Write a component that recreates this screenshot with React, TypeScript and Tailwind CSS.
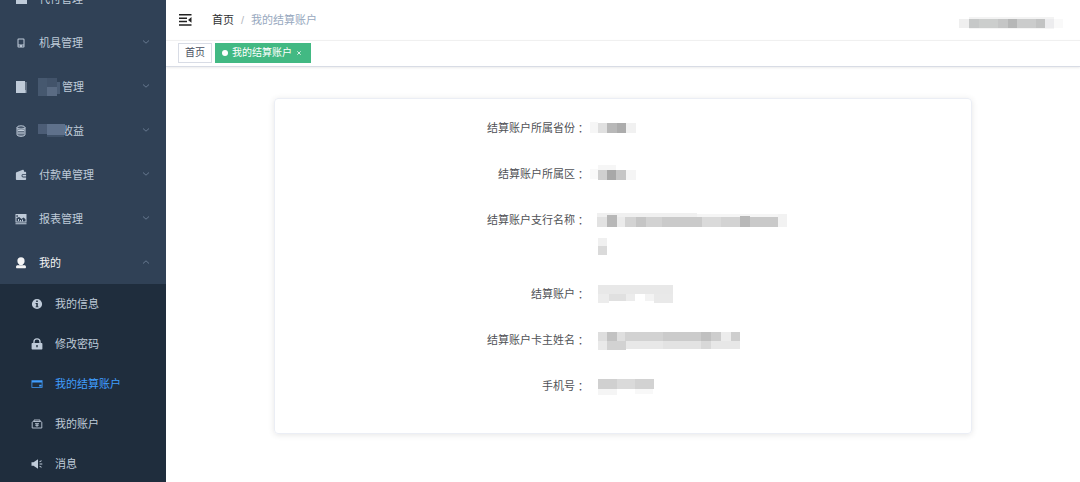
import React from "react";

type Cell = [number, number, number, number, string];

function Mosaic({ width, height, cells, label }: { width: number; height: number; cells: Cell[]; label: string }) {
  return (
    <svg
      width={width}
      height={height}
      viewBox={`0 0 ${width} ${height}`}
      role="img"
      aria-label={label}
      shapeRendering="crispEdges"
      className="block shrink-0 overflow-visible"
    >
      {cells.map(([x, y, w, h, fill], i) => (
        <rect key={i} x={x} y={y} width={w} height={h} fill={fill} />
      ))}
    </svg>
  );
}

function Icon({ children }: { children: React.ReactNode }) {
  return (
    <svg width="12" height="12" viewBox="0 0 12 12" fill="currentColor" aria-hidden="true" className="block shrink-0">
      {children}
    </svg>
  );
}

const icons = {
  order: <path d="M1 1h11v10H1z" />,
  device: (
    <path
      fillRule="evenodd"
      d="M3.5 1.5h5a1 1 0 0 1 1 1v7a1 1 0 0 1-1 1h-5a1 1 0 0 1-1-1v-7a1 1 0 0 1 1-1zm0 1v5h5v-5zm0 6v1h1.6v-1zm3.4 0v1h1.6v-1z"
    />
  ),
  blurred: (
    <>
      <path d="M1 0h9v12H1z" />
      <path d="M10 1h3v11h-3z" opacity="0.35" />
      <path d="M9 9h2v3H9z" opacity="0.6" />
    </>
  ),
  income: (
    <>
      <path
        fillOpacity="0.35"
        d="M2 2.500h8v7.200c0 .9-1.800 1.600-4 1.600s-4-.7-4-1.600z"
      />
      <g fill="none" stroke="currentColor">
        <ellipse cx="6" cy="2.500" rx="4" ry="1.700" />
        <path d="M2 2.500v7.200c0 .9 1.800 1.600 4 1.600s4-.7 4-1.600V2.500M3 5.500h6M3 8h6" />
      </g>
    </>
  ),
  wallet: (
    <path
      fillRule="evenodd"
      d="M1.500 3.200 7.800.8c.5-.2.9 0 1 .5l.3 1.500h1.200c.5 0 .8.3.8.800V5H8.200a1.700 1.700 0 0 0 0 3.400h2.900v1.800c0 .5-.3.800-.8.800H1.700c-.5 0-.8-.3-.8-.8V4c0-.4.200-.7.600-.8zM8.300 5.800h2.800v1.800H8.300a.9.9 0 0 1 0-1.800z"
    />
  ),
  report: (
    <>
      <path fillRule="evenodd" d="M.5 1h11v8.500h-11zm1 1v2h1.200V2zm0 3v3.500h9V6.200L8.600 4.400 6.400 6 4.200 4z" />
      <path d="M.5 10.300h11v1H.5zM3 6h1v2H3zm2 1h1v1.500H5zm2-.5h1v2H7z" />
    </>
  ),
  user: (
    <>
      <circle cx="6" cy="3.900" r="3.600" />
      <path d="M4.300 6h3.400v2H4.300zM2 8.300h8c.7.400 1 .9 1 1.600 0 .9-.4 1.300-1 1.300H2c-.6 0-1-.4-1-1.300 0-.7.300-1.200 1-1.600z" />
    </>
  ),
  info: (
    <path
      fillRule="evenodd"
      d="M6 .9a5.100 5.100 0 1 1 0 10.200A5.100 5.100 0 0 1 6 .9zm-.8 1.600V4h1.600V2.500zM4.600 5v1h.7v2.500h-.7v.8h2.900v-.8h-.7V5z"
    />
  ),
  lock: (
    <path
      fillRule="evenodd"
      d="M2.300 5V4a3.700 3.700 0 0 1 7.400 0v1h1c.4 0 .7.300.7.700v5c0 .4-.3.700-.7.700H1.300c-.4 0-.7-.3-.7-.7v-5c0-.4.300-.7.700-.7zm1.300 0h4.800V4a2.400 2.400 0 0 0-4.800 0zm1.700 2v2.300h1.400V7z"
    />
  ),
  card: (
    <path
      fillRule="evenodd"
      d="M.5 2.200h11v7.600h-11zm.8 2.300V9h9.400V4.500zM8.200 6.700h2.200v1.800H8.200z"
    />
  ),
  account: (
    <g fill="none" stroke="currentColor" strokeWidth="0.900">
      <path d="M3 3.500V2h6v1.500M1.200 4.500C1.200 4 1.700 3.500 2.300 3.500h7.400c.6 0 1.100.5 1.100 1V10H1.200zM4 5.700h4M4.300 7.300h3.400M6 5.700v3.200" />
    </g>
  ),
  message: (
    <path d="M.5 4.300h2L7 1.300v9.400l-4.500-3h-2zM8.300 3.500l2-1.300.5.800-2 1.300zM8.600 5.500h2.700v1H8.600zM8.800 7.700l2 1.300-.5.800-2-1.300z" />
  ),
};

function Chevron({ up = false }: { up?: boolean }) {
  return (
    <svg width="8" height="8" viewBox="0 0 8 8" fill="none" stroke="currentColor" aria-hidden="true" className="mr-4 mb-0.5 ml-auto shrink-0 text-[#66788f]">
      <path d={up ? "M1 5.500 4 2.800l3 2.700" : "M1 2.500l3 2.700 3-2.700"} />
    </svg>
  );
}

interface Group {
  id: string;
  icon: React.ReactNode;
  text: string;
  redacted?: { width: number; cells: Cell[] };
  open?: boolean;
}

const groups: Group[] = [
  { id: "order", icon: icons.order, text: "代付管理" },
  { id: "device", icon: icons.device, text: "机具管理" },
  {
    id: "manage",
    icon: icons.blurred,
    text: "管理",
    redacted: {
      width: 23,
      cells: [
        [-1, -3, 9, 18, "#46586f"],
        [8, -3, 10, 9, "#42536a"],
        [8, 6, 10, 9, "#5a6b83"],
        [18, 1, 3, 12, "#4b5d75"],
      ],
    },
  },
  {
    id: "income",
    icon: icons.income,
    text: "收益",
    redacted: {
      width: 23,
      cells: [
        [-1, -1, 9, 10, "#4c5d76"],
        [8, -1, 18, 11, "#5f718b"],
        [8, 10, 17, 2, "#405269"],
      ],
    },
  },
  { id: "payment", icon: icons.wallet, text: "付款单管理" },
  { id: "report", icon: icons.report, text: "报表管理" },
  { id: "mine", icon: icons.user, text: "我的", open: true },
];

const children = [
  { icon: icons.info, text: "我的信息" },
  { icon: icons.lock, text: "修改密码" },
  { icon: icons.card, text: "我的结算账户", active: true },
  { icon: icons.account, text: "我的账户" },
  { icon: icons.message, text: "消息" },
];

function Sidebar() {
  return (
    <aside className="w-[166px] shrink-0 overflow-hidden bg-[#304156] text-[#bfcbd9]">
      <nav className="-mt-6">
        {groups.map((g) => (
          <button
            key={g.id}
            type="button"
            aria-expanded={!!g.open}
            className={`flex h-11 w-full items-center pt-px pl-[15px] text-left ${g.open ? "text-[#f4f4f5]" : ""}`}
          >
            <Icon>{g.icon}</Icon>
            <span className="ml-3 flex items-center">
              {g.redacted && (
                <span className="relative z-10">
                  <Mosaic width={g.redacted.width} height={12} cells={g.redacted.cells} label="已隐藏" />
                </span>
              )}
              {g.text}
            </span>
            <Chevron up={g.open} />
          </button>
        ))}
        <ul className="bg-[#1f2d3d]">
          {children.map((c) => (
            <li key={c.text}>
              <a
                href="#"
                aria-current={c.active ? "page" : undefined}
                className={`flex h-10 items-center gap-3 pl-[31px] ${c.active ? "text-[#409eff]" : ""}`}
              >
                <Icon>{c.icon}</Icon>
                {c.text}
              </a>
            </li>
          ))}
        </ul>
      </nav>
    </aside>
  );
}

function Header() {
  return (
    <header className="flex h-10 items-center px-3">
      <button type="button" aria-label="收起菜单" className="text-[#222]">
        <svg width="14" height="12" viewBox="0 0 14 12" fill="currentColor" aria-hidden="true">
          <path d="M1 0h12.500v1.500H1zM1 3.500h8v1.400H1zM1 6.800h8v1.400H1zM1 10.300h12.500v1.500H1zM13.500 3v5.800L10 5.900z" />
        </svg>
      </button>
      <nav aria-label="面包屑" className="ml-5 flex items-center">
        <a href="#" className="text-[#303133]">首页</a>
        <span className="mx-[7px] text-[#b4b8c0]">/</span>
        <span className="text-[#97a8be]">我的结算账户</span>
      </nav>
      <div className="mt-1.5 mr-3 ml-auto">
        <Mosaic
          width={96}
          height={9}
          label="用户"
          cells={[
            [-1, 0, 10, 9, "#efefef"],
            [9, -2, 85, 2, "#f3f3f3"],
            [9, 0, 10, 9, "#c6c8c8"],
            [19, 0, 19, 9, "#cccecd"],
            [38, 0, 10, 9, "#c5c6c6"],
            [48, 0, 9, 9, "#b6b7b7"],
            [57, 0, 19, 9, "#cbcccc"],
            [76, 0, 9, 9, "#c2c3c3"],
            [85, 0, 9, 9, "#ececee"],
            [94, 0, 9, 9, "#f9f9f9"],
            [9, 9, 85, 1, "#f5f5f5"],
          ]}
        />
      </div>
    </header>
  );
}

function Tags() {
  return (
    <div className="flex h-[27px] items-center gap-[3px] border-t border-b border-t-[#f0f0f0] border-b-[#d8dce5] px-3 pb-0.5 text-[10px] shadow-[0_1px_2px_rgba(0,0,0,0.08)]">
      <a href="#" className="flex h-5 items-center border border-[#d8dce5] px-[6px] text-[#495060]">首页</a>
      <div className="flex h-5 items-center bg-[#42b983] pr-[10px] pl-[7px] text-white">
        <span className="mr-1 size-[6px] rounded-full bg-white" />
        <a href="#">我的结算账户</a>
        <button type="button" aria-label="关闭" className="ml-[5px]">
          <svg width="4" height="4" viewBox="0 0 4 4" stroke="currentColor" strokeWidth="0.800" aria-hidden="true">
            <path d="M.3.3l3.400 3.400M3.700.3.3 3.700" />
          </svg>
        </button>
      </div>
    </div>
  );
}

const fields: { label: string; width: number; tall?: boolean; cells: Cell[] }[] = [
  {
    label: "结算账户所属省份",
    width: 39,
    cells: [
      [-7, 8, 8, 11, "#f6f6f6"],
      [1, 9, 9, 10, "#e0e0e0"],
      [10, 9, 10, 10, "#b8b8b8"],
      [20, 9, 9, 10, "#acacac"],
      [29, 9, 10, 10, "#f1f1f1"],
    ],
  },
  {
    label: "结算账户所属区",
    width: 39,
    cells: [
      [-7, 9, 8, 10, "#f9f9f9"],
      [1, 5, 18, 5, "#f6f6f6"],
      [1, 10, 9, 10, "#cfcfcf"],
      [10, 10, 9, 10, "#a8a8a8"],
      [19, 10, 10, 10, "#c6c6c6"],
      [29, 10, 10, 10, "#f5f5f5"],
    ],
  },
  {
    label: "结算账户支行名称",
    width: 190,
    tall: true,
    cells: [
      [0, 7, 100, 4, "#f0f0f0"],
      [100, 8, 82, 3, "#f5f5f5"],
      [0, 11, 10, 10, "#e2e2e2"],
      [10, 9, 10, 12, "#b7b7b7"],
      [20, 11, 8, 10, "#ebebeb"],
      [28, 11, 11, 10, "#d3d3d3"],
      [39, 11, 10, 10, "#c5c5c5"],
      [49, 11, 16, 10, "#d2d2d2"],
      [65, 11, 40, 10, "#cacaca"],
      [105, 11, 19, 10, "#dadada"],
      [124, 11, 19, 10, "#d3d3d3"],
      [143, 10, 10, 11, "#b8b8b8"],
      [153, 11, 28, 10, "#c9c9c9"],
      [181, 8, 9, 13, "#f2f2f2"],
      [1, 32, 9, 8, "#f0f0f0"],
      [1, 40, 9, 9, "#dadada"],
    ],
  },
  {
    label: "结算账户",
    width: 76,
    cells: [
      [1, 5, 75, 9, "#e8e8e8"],
      [1, 14, 11, 9, "#ececec"],
      [12, 14, 17, 7, "#e0e0e0"],
      [29, 14, 9, 7, "#ececec"],
      [48, 14, 10, 7, "#f3f3f3"],
      [57, 14, 19, 9, "#e9e9e9"],
    ],
  },
  {
    label: "结算账户卡主姓名",
    width: 142,
    cells: [
      [1, 6, 9, 9, "#dedede"],
      [10, 6, 10, 9, "#c2c2c2"],
      [20, 6, 8, 9, "#dfdfdf"],
      [28, 6, 38, 9, "#d2d2d2"],
      [66, 6, 38, 9, "#cbcbcb"],
      [104, 6, 10, 9, "#c0c0c0"],
      [114, 6, 10, 9, "#cdcdcd"],
      [124, 6, 10, 9, "#ececec"],
      [134, 6, 9, 9, "#cecece"],
      [1, 15, 9, 9, "#e9e9e9"],
      [10, 15, 19, 9, "#d2d2d2"],
      [29, 15, 37, 8, "#e8e8e8"],
      [66, 15, 38, 8, "#e3e3e3"],
      [104, 15, 10, 8, "#d8d8d8"],
      [114, 15, 29, 8, "#e7e7e7"],
    ],
  },
  {
    label: "手机号",
    width: 57,
    cells: [
      [1, 7, 19, 10, "#d0d0d0"],
      [20, 7, 18, 10, "#dadada"],
      [38, 7, 19, 10, "#d2d2d2"],
      [1, 17, 19, 6, "#f5f5f5"],
      [38, 17, 18, 5, "#f8f8f8"],
    ],
  },
];

export default function App() {
  return (
    <div className="flex h-screen overflow-hidden bg-white font-['Liberation_Sans','Noto_Sans_CJK_SC',sans-serif] text-[11px] leading-4">
      <Sidebar />
      <div className="min-w-0 flex-1">
        <Header />
        <Tags />
        <main className="px-[108px] pt-[31px]">
          <dl className="flex flex-col gap-[18px] rounded border border-[#ebeef5] px-4 pt-[15px] pb-[33px] shadow-[0_1px_6px_rgba(0,0,0,0.1)]">
            {fields.map((f) => (
              <div key={f.label} className="flex">
                <dt className="flex w-4/9 justify-end leading-7 text-[#505256]">
                  <span>{f.label}</span>
                  <span className="font-['Noto_Sans_CJK_TC',sans-serif]">：</span>
                </dt>
                <dd className="ml-[11px] flex-1">
                  <Mosaic width={f.width} height={f.tall ? 56 : 28} cells={f.cells} label="已隐藏" />
                </dd>
              </div>
            ))}
          </dl>
        </main>
      </div>
    </div>
  );
}
